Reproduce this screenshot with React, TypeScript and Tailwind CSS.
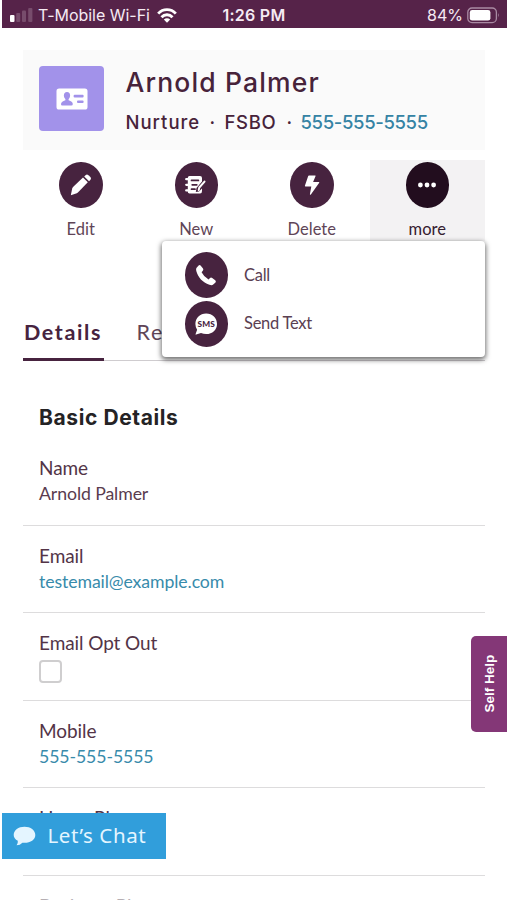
import { type ReactNode } from "react";
import clsx from "clsx";

interface Field {
  label: string;
  value?: string;
  link?: boolean;
  checkbox?: boolean;
  faded?: boolean;
}

const FIELDS: Field[] = [
  { label: "Name", value: "Arnold Palmer" },
  { label: "Email", value: "testemail@example.com", link: true },
  { label: "Email Opt Out", checkbox: true },
  { label: "Mobile", value: "555-555-5555", link: true },
  { label: "Home Phone" },
  { label: "Business Phone", faded: true },
];

function PencilIcon() {
  return (
    <svg width="22" height="22" viewBox="0 0 22 22" fill="#fff">
      <path d="M.8 21.2 L2.2 14.6 Q2.6 13.6 3.3 12.8 L13 3.4 L17.8 8.2 L8.4 18 Q7.6 18.8 6.8 19.2 Z" />
      <path d="M14.2 2.4 L15.8 .9 Q17.1 0 18.4 1.2 L20.4 3.1 Q21.6 4.4 20.5 5.7 L19 7.2 Z" />
    </svg>
  );
}

function NoteIcon() {
  return (
    <svg width="22" height="20" viewBox="0 0 22 20" fill="none">
      <path
        d="M4.5 1 H15 Q17 1 17 3 V6.5 L11.5 13 L10.8 17 L14 16.4 L17 13.6 V16 Q17 18.5 15 18.5 H4.5 Q2.8 18.5 2.8 16.8 V2.7 Q2.8 1 4.5 1 Z"
        fill="#fff"
      />
      <path d="M1.2 4.2 H4 M1.2 9.8 H4 M1.2 15.4 H4" stroke="#fff" strokeWidth="2.2" strokeLinecap="round" />
      <path d="M6.5 5.4 H13.4 M7.2 9.8 H11.8 M6.5 14.2 H10" stroke="#47233f" strokeWidth="1.7" strokeLinecap="round" />
      <path d="M13.7 15 L14.3 12.5 L19.5 6.6" stroke="#fff" strokeWidth="2" strokeLinecap="round" strokeLinejoin="round" />
    </svg>
  );
}

function BoltIcon() {
  return (
    <svg width="16" height="22" viewBox="0 0 16 22" fill="#fff">
      <path d="M5 1.4 H11.2 Q11.8 1.4 11.6 2 L9.1 8 H14.8 Q15.6 8 15.2 8.8 L6.9 20.4 Q6 21.2 5.9 20.3 L7.3 12.5 H1.6 Q.7 12.5 .9 11.7 L4.2 2 Q4.4 1.4 5 1.4 Z" />
    </svg>
  );
}

function DotsIcon() {
  return (
    <svg width="20" height="6" viewBox="0 0 20 6" fill="#fff">
      <circle cx="3.4" cy="3" r="2.4" />
      <circle cx="10" cy="3" r="2.4" />
      <circle cx="16.6" cy="3" r="2.4" />
    </svg>
  );
}

function PhoneIcon() {
  return (
    <svg width="22" height="22" viewBox="0 0 22 22" fill="#fff">
      <path d="M1.4 4 L3.6 1.5 Q4.8.6 5.8 1.8 L8 4.6 Q8.8 5.8 7.8 6.8 L6.6 8.2 Q8.8 12.8 13.6 15.4 L15 14 Q16 13.2 17.2 14 L20.2 16.2 Q21.4 17.2 20.5 18.4 L18.2 20.6 Q17 21.6 14.4 20.8 C7.6 18.4 3 13.4 1.3 7 Q.8 5.2 1.4 4 Z" />
    </svg>
  );
}

function SmsIcon() {
  return (
    <svg width="24" height="24" viewBox="0 0 24 24">
      <path
        d="M12.2 1.6 C18.4 1.6 23 6 23 11.9 C23 17.8 18.4 22 12.2 22 Q9.4 22 7 20.9 L2.2 22.6 Q1.4 22.8 1.6 22 L3.1 17.7 Q1.4 15.2 1.4 11.9 C1.4 6 6 1.6 12.2 1.6 Z"
        fill="#fff"
      />
      <text
        x="12.2"
        y="14.9"
        textAnchor="middle"
        fill="#47233f"
        className="font-['Lato',sans-serif] text-[8.3px] font-black tracking-[0.1px]"
      >
        SMS
      </text>
    </svg>
  );
}

function ContactIcon() {
  return (
    <svg width="32" height="22" viewBox="0 0 32 22">
      <rect x=".5" y=".5" width="31" height="21" rx="2.6" fill="#fff" />
      <g fill="#a292ea">
        <ellipse cx="11" cy="7.6" rx="3.1" ry="3.7" />
        <path d="M9.4 10 H12.6 V12.2 Q16.6 13.4 16.8 16 Q16.8 17.5 15.4 17.5 H6.2 Q4.9 17.5 5 16 Q5.4 13.4 9.4 12.2 Z" />
        <rect x="17.6" y="6.8" width="10" height="2.7" rx="1" />
        <rect x="21" y="12.4" width="6.6" height="2.7" rx="1" />
      </g>
    </svg>
  );
}

function WifiIcon() {
  return (
    <svg width="20" height="15" viewBox="0 0 20 15" fill="none" stroke="#fff" strokeWidth="2.9">
      <path d="M1.2 5.6 C6 .3 14 .3 18.8 5.6" />
      <path d="M4.5 9.2 C7.5 6 12.5 6 15.5 9.2" />
      <path d="M6.8 11.5 Q10 8.8 13.2 11.5 L10 14.8 Z" fill="#fff" stroke="none" />
    </svg>
  );
}

function StatusBar() {
  return (
    <div className="relative ml-[2px] flex h-[28px] items-center bg-[#562349] pt-[2px] font-['Inter',sans-serif] text-[16px] text-[#f5eaf3]">
      <svg className="ml-[8px]" width="23" height="14" viewBox="0 0 23 14">
        <rect x="0" y="7" width="4.5" height="7" rx="1" fill="#fff" />
        <rect x="6.2" y="5" width="4" height="9" rx="1" fill="#774c6c" />
        <rect x="12" y="2.5" width="4" height="11.5" rx="1" fill="#774c6c" />
        <rect x="18.2" y="0" width="4.2" height="14" rx="1" fill="#774c6c" />
      </svg>
      <span className="ml-[5px] mr-[7px] tracking-[-0.02px]">T-Mobile Wi-Fi</span>
      <WifiIcon />
      <span className="absolute left-[220.5px] font-semibold tracking-[0.25px]">1:26 PM</span>
      <span className="ml-auto mr-[4px]">84%</span>
      <svg className="mr-[7px]" width="33" height="17" viewBox="0 0 33 17">
        <rect x=".8" y="1" width="28.6" height="14.6" rx="4.2" fill="none" stroke="#a98aa3" strokeWidth="1.3" />
        <rect x="2.8" y="3" width="20.6" height="10.6" rx="2.4" fill="#fff" />
        <path d="M31 6 Q32.7 8.3 31 10.6 Z" fill="#a98aa3" />
      </svg>
    </div>
  );
}

function RoundIcon({ children, dark }: { children: ReactNode; dark?: boolean }) {
  return (
    <span
      className={clsx(
        "flex h-[46px] w-[43.5px] shrink-0 items-center justify-center rounded-[50%]",
        dark ? "bg-[#220d1e]" : "bg-[#47233f]"
      )}
    >
      {children}
    </span>
  );
}

function ActionButton({ label, icon, active }: { label: string; icon: ReactNode; active?: boolean }) {
  return (
    <button
      type="button"
      className={clsx(
        "flex h-[81px] flex-col items-center pt-[2px] text-[16.5px]",
        active ? "bg-[#f3f2f3] text-[#35202f]" : "text-[#5f4557]"
      )}
    >
      <RoundIcon dark={active}>{icon}</RoundIcon>
      <span className="mt-[10px] leading-[22px]">{label}</span>
    </button>
  );
}

function MoreMenu() {
  return (
    <div
      role="menu"
      className="absolute left-[162px] top-[241px] flex h-[116px] w-[323px] flex-col gap-[2.5px] rounded-[4px] bg-white pl-[22.5px] pt-[11px] text-[16.5px] tracking-[-0.25px] text-[#5a4052] shadow-[0_2px_5px_1px_rgba(0,0,0,0.55)]"
    >
      <div role="menuitem" className="flex items-center gap-[16px]">
        <RoundIcon><PhoneIcon /></RoundIcon>
        <span>Call</span>
      </div>
      <div role="menuitem" className="flex items-center gap-[16px]">
        <RoundIcon><SmsIcon /></RoundIcon>
        <span>Send Text</span>
      </div>
    </div>
  );
}

function FieldRow({ field }: { field: Field }) {
  return (
    <div className="h-[87.5px] border-b-[1.5px] border-[#dddcdd] pl-[16px] pt-[17px]">
      <div
        className={clsx(
          "text-[19px] leading-[26px] tracking-[-0.08px]",
          field.faded ? "text-[#b5aeb3]" : "text-[#533447]"
        )}
      >
        {field.label}
      </div>
      {field.value && (
        <div
          className={clsx(
            "text-[17.7px] leading-[26px] tracking-[-0.1px]",
            field.link ? "text-[#388bab]" : "text-[#5a3c4f]"
          )}
        >
          {field.value}
        </div>
      )}
      {field.checkbox && <div className="mt-[3.5px] size-[23px] rounded-[4px] border-2 border-[#cfcecf]" />}
    </div>
  );
}

export default function App() {
  return (
    <div className="relative h-[900px] w-[507px] overflow-hidden bg-white font-['Lato',sans-serif]">
      <StatusBar />

      <div className="ml-[23px] mt-[22px] w-[462px]">
        <header className="flex h-[100px] bg-[#fafafa] pl-[16px] pt-[16px] font-['Inter',sans-serif] font-medium text-[#47233a]">
          <div className="flex size-[65px] items-center justify-center rounded-[4px] bg-[#a292ea]">
            <ContactIcon />
          </div>
          <div className="ml-[21.5px]">
            <h1 className="whitespace-nowrap text-[26.5px] leading-[33px] tracking-[1.15px]">Arnold Palmer</h1>
            <p className="mt-[10px] flex whitespace-nowrap text-[18.5px] leading-[26px]">
              <span className="w-[84px] tracking-[1px]">Nurture</span>
              <span className="w-[15px]">·</span>
              <span className="w-[62px] tracking-[0.7px]">FSBO</span>
              <span className="w-[14px]">·</span>
              <span className="tracking-[-0.35px] text-[#3583a4]">555-555-5555</span>
            </p>
          </div>
        </header>

        <div className="mt-[10px] grid grid-cols-4">
          <ActionButton label="Edit" icon={<PencilIcon />} />
          <ActionButton label="New" icon={<NoteIcon />} />
          <ActionButton label="Delete" icon={<BoltIcon />} />
          <ActionButton label="more" icon={<DotsIcon />} active />
        </div>

        <nav className="mt-[64px] flex h-[56px] border-b border-[#cfcccf] text-[21.5px] leading-[26px] tracking-[1.8px] text-[#47233f]">
          <div className="-mb-px w-[81px] whitespace-nowrap border-b-[3px] border-[#47233f] pl-[1px] pt-[14px] font-bold tracking-[1.6px]">
            Details
          </div>
          <div className="ml-[32.5px] pt-[14px] text-[#5f4557]">Related</div>
        </nav>

        <section>
          <h2 className="flex h-[77.2px] items-center pl-[16px] pt-[37px] font-['Inter',sans-serif] text-[21px] font-bold tracking-[0.6px] text-[#252325]">
            Basic Details
          </h2>
          {FIELDS.map((f) => (
            <FieldRow key={f.label} field={f} />
          ))}
        </section>
      </div>

      <MoreMenu />

      <button
        type="button"
        className="absolute right-0 top-[636px] flex h-[96px] w-[36px] items-center justify-center rounded-l-[5px] bg-[#843777]"
      >
        <span className="-rotate-90 whitespace-nowrap pt-[3px] font-['Liberation_Sans',sans-serif] text-[13.5px] font-bold text-white">
          Self Help
        </span>
      </button>

      <button
        type="button"
        className="absolute left-[2px] top-[813px] flex h-[46px] w-[164px] items-center bg-[#319edb] pl-[11px] text-[#e4f5ff]"
      >
        <svg width="23" height="20" viewBox="0 0 23 20" fill="currentColor">
          <path d="M11.5 .8 C17.6 .8 22.3 4.3 22.3 8.9 C22.3 13.5 17.6 16.8 11.5 16.8 L9.4 16.7 Q7 19.2 3.6 19.2 Q5.2 17.4 4.8 14.8 C2.2 13.4 .7 11.4 .7 8.9 C.7 4.3 5.4 .8 11.5 .8 Z" />
        </svg>
        <span className="ml-[11.5px] whitespace-nowrap pb-[2px] font-['Noto_Sans',sans-serif] text-[20.5px] tracking-[0.6px]">
          Let’s Chat
        </span>
      </button>
    </div>
  );
}
